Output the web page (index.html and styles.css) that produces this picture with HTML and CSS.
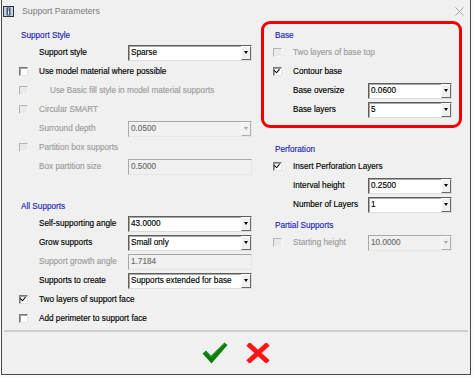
FILE: index.html
```html
<!DOCTYPE html>
<html>
<head>
<meta charset="utf-8">
<title>Support Parameters</title>
<link rel="stylesheet" href="styles.css">
</head>
<body>
<div class="window">
  <div class="titlebar">
    <svg class="app-icon" width="11" height="11" viewBox="0 0 11 11">
      <rect x="0.5" y="0.5" width="10" height="10" fill="#c9d1dc" stroke="#333"/>
      <rect x="3.5" y="1.5" width="4" height="8" fill="#3b5b8c"/>
      <rect x="5" y="2.5" width="1" height="1" fill="#fff"/>
      <rect x="5" y="4.5" width="1" height="4" fill="#fff"/>
    </svg>
    <span class="title">Support Parameters</span>
    <svg class="close" width="9" height="9" viewBox="0 0 9 9">
      <path d="M0.5 0.5 L8.5 8.5 M8.5 0.5 L0.5 8.5" stroke="#9a9a9a" stroke-width="0.9" fill="none"/>
    </svg>
  </div>

  <div class="content">
    <div class="col col-left">
      <div class="row heading">Support Style</div>
      <div class="row">
        <span class="label">Support style</span>
        <div class="combo"><span class="val">Sparse</span><span class="btn"><i class="tri"></i></span></div>
      </div>
      <div class="row"><span class="cb"></span><span>Use model material where possible</span></div>
      <div class="row disabled"><span class="cb"></span><span class="indent">Use Basic fill style in model material supports</span></div>
      <div class="row disabled"><span class="cb"></span><span>Circular SMART</span></div>
      <div class="row disabled">
        <span class="label">Surround depth</span>
        <div class="combo"><span class="val">0.0500</span><span class="btn"><i class="tri"></i></span></div>
      </div>
      <div class="row disabled"><span class="cb"></span><span>Partition box supports</span></div>
      <div class="row disabled">
        <span class="label">Box partition size</span>
        <div class="combo"><span class="val">0.5000</span></div>
      </div>
      <div class="row"></div>
      <div class="row heading">All Supports</div>
      <div class="row">
        <span class="label">Self-supporting angle</span>
        <div class="combo"><span class="val">43.0000</span><span class="btn"><i class="tri"></i></span></div>
      </div>
      <div class="row">
        <span class="label">Grow supports</span>
        <div class="combo"><span class="val">Small only</span><span class="btn"><i class="tri"></i></span></div>
      </div>
      <div class="row disabled">
        <span class="label">Support growth angle</span>
        <div class="combo"><span class="val">1.7184</span></div>
      </div>
      <div class="row">
        <span class="label">Supports to create</span>
        <div class="combo"><span class="val">Supports extended for base</span><span class="btn"><i class="tri"></i></span></div>
      </div>
      <div class="row"><span class="cb checked"></span><span>Two layers of support face</span></div>
      <div class="row"><span class="cb"></span><span>Add perimeter to support face</span></div>
    </div>

    <div class="col col-right">
      <div class="row heading">Base</div>
      <div class="row disabled"><span class="cb"></span><span>Two layers of base top</span></div>
      <div class="row"><span class="cb checked"></span><span>Contour base</span></div>
      <div class="row">
        <span class="label">Base oversize</span>
        <div class="combo"><span class="val">0.0600</span><span class="btn"><i class="tri"></i></span></div>
      </div>
      <div class="row">
        <span class="label">Base layers</span>
        <div class="combo"><span class="val">5</span><span class="btn"><i class="tri"></i></span></div>
      </div>
      <div class="row"></div>
      <div class="row heading">Perforation</div>
      <div class="row"><span class="cb checked"></span><span>Insert Perforation Layers</span></div>
      <div class="row">
        <span class="label">Interval height</span>
        <div class="combo"><span class="val">0.2500</span><span class="btn"><i class="tri"></i></span></div>
      </div>
      <div class="row">
        <span class="label">Number of Layers</span>
        <div class="combo"><span class="val">1</span><span class="btn"><i class="tri"></i></span></div>
      </div>
      <div class="row heading">Partial Supports</div>
      <div class="row disabled">
        <span class="cb"></span><span class="short-label">Starting height</span>
        <div class="combo"><span class="val">10.0000</span><span class="btn"><i class="tri"></i></span></div>
      </div>
      <div class="highlight"></div>
    </div>
  </div>

  <div class="sep"></div>
  <div class="actions">
    <svg width="26" height="22" viewBox="0 0 26 22">
      <path d="M0.5 11.5 L4 8.5 L9 13.8 L22.5 0.5 L25.5 3 L9.5 21.5 Z" fill="#0b7f0b"/>
      <path d="M1.5 11.6 L4 9.5 L9 14.8 L22.5 1.6" stroke="#2fa32f" stroke-width="0.8" fill="none"/>
    </svg>
    <svg width="24" height="20" viewBox="0 0 24 20">
      <path d="M2 1 L22 19 M22 1 L2 19" stroke="#ff1414" stroke-width="5" fill="none"/>
    </svg>
  </div>
</div>
</body>
</html>
```

FILE: styles.css
```css
html, body {
  margin: 0;
  padding: 0;
  background: #fafafa;
}

.window {
  margin-left: 1px;
  width: 470px;
  height: 375px;
  box-sizing: border-box;
  border: 1px solid #4a4a4a;
  border-top: none;
  background: #f0f0f0;
  font-family: "Liberation Sans", Arial, sans-serif;
  font-size: 8.2px;
  color: #000;
  -webkit-text-stroke: 0.15px currentColor;
  display: flex;
  flex-direction: column;
}

.titlebar {
  height: 24px;
  box-sizing: border-box;
  padding-bottom: 2px;
  display: flex;
  align-items: center;
}

.app-icon {
  margin-left: 1px;
  display: block;
}

.title {
  margin-left: 8px;
  font-size: 8.7px;
  color: #7a7a7a;
  -webkit-text-stroke: 0;
}

.close {
  margin-left: auto;
  margin-right: 6px;
  margin-top: 1px;
  display: block;
}

.content {
  display: flex;
}

.col {
  display: flex;
  flex-direction: column;
}

.col-left {
  width: 260px;
}

.col-right {
  width: 206px;
  position: relative;
}

.row {
  height: 19px;
  display: flex;
  align-items: center;
  white-space: nowrap;
}

.heading {
  color: #1f1fb2;
  padding-top: 3px;
  box-sizing: border-box;
}

.col-left .heading { padding-left: 19px; }
.col-right .heading { padding-left: 13px; }

.disabled { color: #9c9c9c; }

.cb {
  width: 9px;
  height: 9px;
  box-sizing: border-box;
  margin-right: 11px;
  background: #fff;
  border: 1px solid;
  border-color: #7a7a7a #e4e4e4 #e4e4e4 #7a7a7a;
  box-shadow: inset 1px 1px 0 #a0a0a0;
  position: relative;
  flex: none;
}

.col-left .cb { margin-left: 17px; }
.col-right .cb { margin-left: 11px; }

.disabled .cb {
  background: #eaeaea;
  border-color: #b4b4b4 #f4f4f4 #f4f4f4 #b4b4b4;
  box-shadow: none;
}

.cb.checked::after {
  content: "";
  position: absolute;
  left: 1px;
  top: 0px;
  width: 3px;
  height: 4px;
  border: solid #000;
  border-width: 0 1.5px 1.5px 0;
  transform: rotate(40deg);
  transform-origin: 60% 40%;
}

.indent { margin-left: 11px; }

.label {
  box-sizing: border-box;
  flex: none;
}

.col-left .label {
  width: 126px;
  padding-left: 37px;
}

.col-right .label {
  width: 106px;
  padding-left: 31px;
}

.short-label {
  width: 75px;
  flex: none;
}

.combo {
  display: flex;
  height: 16px;
  box-sizing: border-box;
  background: #fff;
  border: 1px solid;
  border-color: #5e5e5e #dcdcdc #dcdcdc #5e5e5e;
  box-shadow: inset 1px 1px 0 #a8a8a8;
  color: #000;
  flex: none;
}

.col-left .combo { width: 124px; }
.col-right .combo { width: 84px; }

.combo .val {
  flex: 1;
  padding-left: 2px;
  line-height: 14px;
  overflow: hidden;
}

.combo .btn {
  width: 10px;
  flex: none;
  box-sizing: border-box;
  background: #f0f0f0;
  border: 1px solid;
  border-color: #fdfdfd #6a6a6a #6a6a6a #fdfdfd;
  display: flex;
  align-items: center;
  justify-content: center;
}

.tri {
  display: block;
  width: 0;
  height: 0;
  border-left: 2.5px solid transparent;
  border-right: 2.5px solid transparent;
  border-top: 3px solid #000;
}

.disabled .combo {
  background: #f0f0f0;
  color: #6d6d6d;
  border-color: #a8a8a8 #e6e6e6 #e6e6e6 #a8a8a8;
  box-shadow: none;
}

.disabled .combo .btn {
  border-color: #fafafa #b0b0b0 #b0b0b0 #fafafa;
}

.disabled .tri { border-top-color: #a6a6a6; }

.highlight {
  position: absolute;
  left: -1px;
  top: -3px;
  width: 201px;
  height: 107px;
  box-sizing: border-box;
  border: 3px solid #f20000;
  border-radius: 9px;
  pointer-events: none;
}

.sep {
  height: 2px;
  margin: 2px 2px 0 2px;
  background: #cdcdcd;
}

.actions {
  flex: 1;
  display: flex;
  align-items: center;
  justify-content: center;
  gap: 18px;
}

.actions svg { display: block; }
```
